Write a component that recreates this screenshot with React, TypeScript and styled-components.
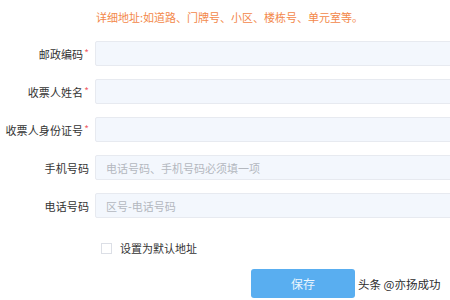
import { Fragment } from "react";
import styled, { createGlobalStyle } from "styled-components";

const GlobalStyle = createGlobalStyle`
  html, body {
    margin: 0;
    padding: 0;
    background: #fff;
    overflow: hidden;
    font-family: "Noto Sans CJK SC", "Noto Sans", sans-serif;
  }
`;

const Page = styled.div`
  width: 470px;
  height: 300px;
  padding-top: 9px;
  box-sizing: border-box;
`;

const Form = styled.div`
  display: grid;
  grid-template-columns: 89px 1fr;
  column-gap: 6px;
  row-gap: 13px;
  align-items: center;
`;

const Hint = styled.div`
  grid-column: 2;
  color: #f3884a;
  font-size: 11px;
  line-height: 16px;
  padding-left: 1px;
  margin-bottom: 3px;
`;

const Label = styled.label`
  text-align: right;
  font-size: 11px;
  color: #333;
  white-space: nowrap;
  letter-spacing: 0.1px;
`;

const Star = styled.span`
  color: #f0606a;
  font-size: 10px;
  vertical-align: 2px;
  margin-left: 1px;
`;

const Input = styled.input`
  height: 25px;
  box-sizing: border-box;
  border: 1px solid #e7eaf0;
  background: #f3f7fd;
  border-radius: 2px;
  padding: 0 10px;
  font-size: 11px;
  font-family: inherit;
  color: #333;
  outline: none;
  &::placeholder {
    color: #b4b8bf;
  }
`;

const CheckRow = styled.div`
  grid-column: 2;
  display: flex;
  align-items: center;
  gap: 8px;
  padding-left: 6px;
  margin-top: 9px;
  font-size: 11px;
  color: #333;
`;

const Box = styled.span`
  width: 9px;
  height: 9px;
  border: 1px solid #dcdfe6;
  background: #fff;
`;

const Actions = styled.div`
  display: flex;
  align-items: center;
  padding-left: 251px;
  margin-top: 13px;
`;

const SaveButton = styled.button`
  width: 104px;
  height: 29px;
  border: none;
  border-radius: 3px;
  background: #59aef0;
  color: #eaf5fd;
  font-size: 12px;
  font-family: inherit;
`;

const Watermark = styled.span`
  margin-left: 3px;
  font-size: 11.5px;
  color: #2b2b2b;
`;

const fields = [
  { label: "邮政编码", required: true, placeholder: "" },
  { label: "收票人姓名", required: true, placeholder: "" },
  { label: "收票人身份证号", required: true, placeholder: "" },
  { label: "手机号码", required: false, placeholder: "电话号码、手机号码必须填一项" },
  { label: "电话号码", required: false, placeholder: "区号-电话号码" },
];

export default function App() {
  return (
    <Page>
      <GlobalStyle />
      <Form>
        <Hint>详细地址:如道路、门牌号、小区、楼栋号、单元室等。</Hint>
        {fields.map((f) => (
          <Fragment key={f.label}>
            <Label>
              {f.label}
              {f.required && <Star>*</Star>}
            </Label>
            <Input placeholder={f.placeholder} />
          </Fragment>
        ))}
        <CheckRow>
          <Box />
          设置为默认地址
        </CheckRow>
      </Form>
      <Actions>
        <SaveButton>保存</SaveButton>
        <Watermark>头条 @亦扬成功</Watermark>
      </Actions>
    </Page>
  );
}
